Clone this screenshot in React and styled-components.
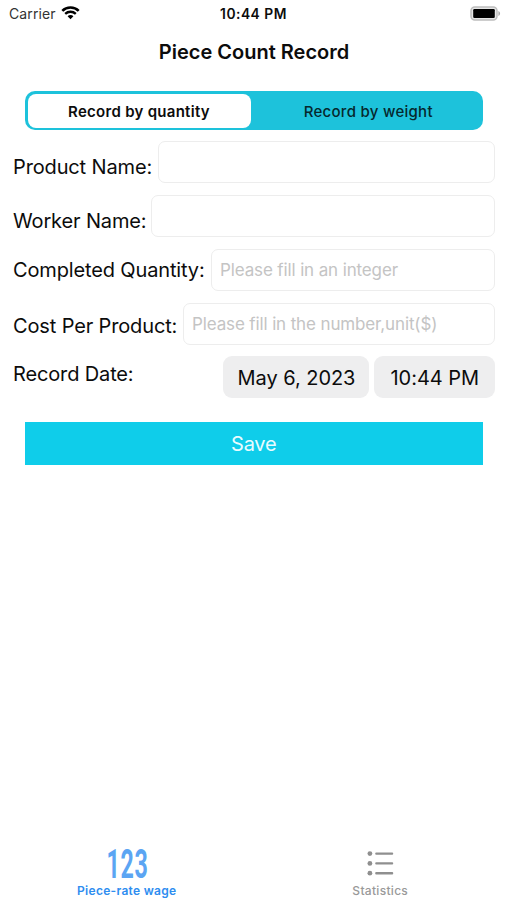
import React from "react";
import styled, { createGlobalStyle } from "styled-components";

function App() {
  return (
    <Screen>
      <GlobalStyle />
      <StatusBar>
        <Carrier>
          Carrier
          <WifiIcon />
        </Carrier>
        <Clock>10:44 PM</Clock>
        <BatteryIcon />
      </StatusBar>
      <Title>Piece Count Record</Title>
      <Segments>
        <Segment $active>Record by quantity</Segment>
        <Segment>Record by weight</Segment>
      </Segments>
      <Form>
        <Row>
          <Label $width={145} $drop={5}>Product Name:</Label>
          <Input />
        </Row>
        <Row>
          <Label $width={138} $drop={5}>Worker Name:</Label>
          <Input />
        </Row>
        <Row>
          <Label $width={198} $drop={0}>Completed Quantity:</Label>
          <Input placeholder="Please fill in an integer" />
        </Row>
        <Row>
          <Label $width={170} $drop={2}>Cost Per Product:</Label>
          <Input placeholder="Please fill in the number,unit($)" />
        </Row>
        <Row>
          <Label $width={210} $drop={-3}>Record Date:</Label>
          <Pickers>
            <Picker $width={146}>May 6, 2023</Picker>
            <Picker $width={120.5}>10:44 PM</Picker>
          </Pickers>
        </Row>
      </Form>
      <Save>Save</Save>
      <TabBar>
        <Tab $active>
          <Numbers>123</Numbers>
          Piece-rate wage
        </Tab>
        <Tab>
          <ListIcon />
          Statistics
        </Tab>
      </TabBar>
    </Screen>
  );
}

function WifiIcon() {
  return (
    <svg width="19" height="14" viewBox="0 0 19 14" fill="none" stroke="#000">
      <path d="M1.3 4.8C5.8.3 13.2.3 17.7 4.8" strokeWidth="2.6" />
      <path d="M4.2 7.9C7.2 5 11.8 5 14.8 7.9" strokeWidth="2.3" />
      <path d="M6.6 10.3C8.2 8.7 10.8 8.7 12.4 10.3L9.5 13.3z" fill="#000" stroke="none" />
    </svg>
  );
}

function BatteryIcon() {
  return (
    <svg width="31" height="15" viewBox="0 0 31 15">
      <rect x="1" y="1" width="26" height="13" rx="3.8" fill="#e6e6e6" stroke="#bdbdbd" strokeWidth="1.5" />
      <rect x="3.2" y="3" width="21.6" height="9" rx="1.2" fill="#000" />
      <path d="M28.4 5v5c2.2-.8 2.2-4.2 0-5z" fill="#a8a8a8" />
    </svg>
  );
}

function ListIcon() {
  return (
    <svg width="28" height="27" viewBox="0 0 28 27" fill="#8f8f8f">
      <circle cx="3.9" cy="3.6" r="2.4" />
      <circle cx="3.9" cy="13.4" r="2.4" />
      <circle cx="3.9" cy="23.2" r="2.4" />
      <rect x="9.2" y="2.4" width="18" height="2.4" rx="1" />
      <rect x="9.2" y="12.2" width="18" height="2.4" rx="1" />
      <rect x="9.2" y="22" width="18" height="2.4" rx="1" />
    </svg>
  );
}

export default App;

const GlobalStyle = createGlobalStyle`
  body {
    margin: 0;
    background: #fff;
  }

  * {
    box-sizing: border-box;
  }
`;

const Screen = styled.div`
  width: 507px;
  height: 900px;
  display: flex;
  flex-direction: column;
  overflow: hidden;
  background: #fff;
  color: #0c0c0c;
  font-family: Inter, "Liberation Sans", sans-serif;
`;

const StatusBar = styled.header`
  display: grid;
  grid-template-columns: 1fr auto 1fr;
  align-items: center;
  height: 27px;
  padding: 0 6px;

  & > svg {
    justify-self: end;
  }
`;

const Carrier = styled.span`
  display: flex;
  align-items: center;
  gap: 5.5px;
  padding-left: 3px;
  font-size: 14px;
  letter-spacing: 0.1px;
  color: #333;

  svg {
    margin-top: -1px;
  }
`;

const Clock = styled.span`
  font-size: 13.8px;
  font-weight: 600;
  letter-spacing: 0.5px;
`;

const Title = styled.h1`
  margin: 0;
  height: 50px;
  padding-left: 1px;
  line-height: 51px;
  text-align: center;
  font-size: 20px;
  font-weight: 600;
`;

const Segments = styled.div`
  display: flex;
  height: 39px;
  margin: 14.3px 24.5px 0 25px;
  padding: 2.5px;
  border-radius: 10px;
  background: #1dc2db;
`;

const Segment = styled.button`
  flex: ${({ $active }) => ($active ? "0 0 223px" : "1")};
  border: 0;
  padding: 1px 0 0 ${({ $active }) => ($active ? 0 : 6)}px;
  border-radius: 8px;
  background: ${({ $active }) => ($active ? "#fff" : "transparent")};
  color: ${({ $active }) => ($active ? "#0c0c0c" : "#06282d")};
  font-family: inherit;
  font-size: 15px;
  font-weight: ${({ $active }) => ($active ? 600 : 500)};
  letter-spacing: 0.28px;
`;

const Form = styled.div`
  display: flex;
  flex-direction: column;
  gap: 11.8px;
  padding: 11px 12px 0 13px;
`;

const Row = styled.div`
  display: flex;
  height: 42px;
`;

const Label = styled.label`
  flex: 0 0 ${({ $width }) => $width}px;
  padding-top: ${({ $drop }) => $drop + 3}px;
  height: 36px;
  line-height: 36px;
  font-size: 20px;
  letter-spacing: -0.14px;
  white-space: nowrap;
`;

const Input = styled.input`
  flex: 1;
  min-width: 0;
  height: 42px;
  padding: 0 8px;
  border: 1px solid #ededed;
  border-radius: 7px;
  background: #fff;
  font-family: inherit;
  font-size: 17px;
  letter-spacing: -0.13px;
  outline: none;

  &::placeholder {
    color: #c4c4c4;
    opacity: 1;
  }
`;

const Pickers = styled.div`
  display: flex;
  gap: 5px;
`;

const Picker = styled.button`
  width: ${({ $width }) => $width}px;
  height: 42px;
  padding: 1px 0 0 1px;
  border: 0;
  border-radius: 9px;
  background: #eeeeef;
  color: #0c0c0c;
  font-family: inherit;
  font-size: 20px;
  letter-spacing: -0.05px;
`;

const Save = styled.button`
  flex: none;
  height: 43px;
  margin: 24px 24.5px 0 25px;
  padding: 1px 0 0;
  border: 0;
  background: #0fcdea;
  color: #e9fcff;
  font-family: inherit;
  font-size: 20px;
  letter-spacing: -0.2px;
`;

const TabBar = styled.nav`
  display: flex;
  height: 54px;
  margin-top: auto;
`;

const Tab = styled.a`
  flex: 1;
  display: grid;
  grid-template-rows: 35px 19px;
  place-items: center;
  align-content: start;
  color: ${({ $active }) => ($active ? "#2e8df0" : "#999")};
  font-size: 12px;
  font-weight: ${({ $active }) => ($active ? 600 : 500)};
  letter-spacing: 0.3px;
`;

const Numbers = styled.span`
  padding: 1px 0 0 3px;
  color: #5ba5f3;
  font-family: Roboto, sans-serif;
  font-size: 40px;
  font-weight: 700;
  line-height: 35px;
  letter-spacing: 1.2px;
  transform: scaleX(0.58);
`;
